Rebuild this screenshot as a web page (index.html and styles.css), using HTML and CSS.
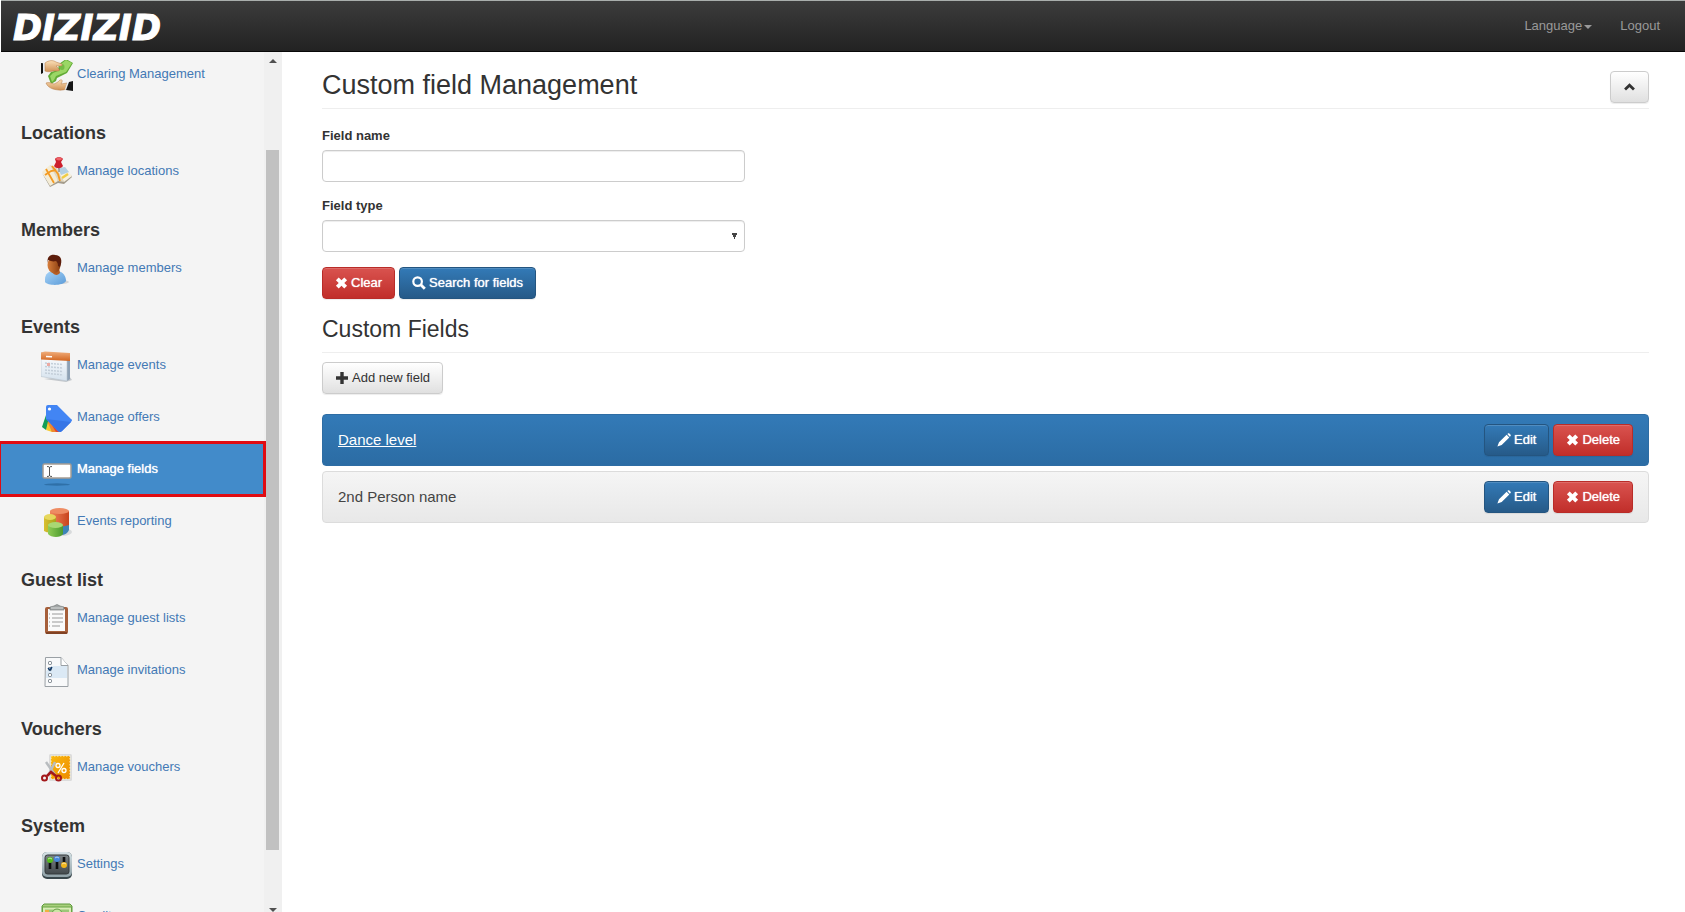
FILE: index.html
```html
<!DOCTYPE html>
<html lang="en">
<head>
<meta charset="utf-8">
<title>Custom field Management</title>
<link rel="stylesheet" href="styles.css">
</head>
<body>
<svg class="sprite" aria-hidden="true">
  <defs>
    <linearGradient id="g-skin" x1="0" y1="0" x2="0" y2="1"><stop offset="0" stop-color="#fbe0b8"/><stop offset="1" stop-color="#cf9256"/></linearGradient>
    <linearGradient id="g-face" x1="0" y1="0" x2="1" y2="0"><stop offset="0" stop-color="#d87f3c"/><stop offset="1" stop-color="#8a3d10"/></linearGradient>
    <linearGradient id="g-shirt" x1="0" y1="0" x2="1" y2="1"><stop offset="0" stop-color="#a8d4f8"/><stop offset="1" stop-color="#5b9bd8"/></linearGradient>
    <linearGradient id="g-orange" x1="0" y1="0" x2="0" y2="1"><stop offset="0" stop-color="#f0ae7c"/><stop offset="1" stop-color="#d3651f"/></linearGradient>
    <linearGradient id="g-page" x1="0" y1="0" x2="0" y2="1"><stop offset="0" stop-color="#ffffff"/><stop offset="1" stop-color="#d5e2ee"/></linearGradient>
    <linearGradient id="g-red" x1="0" y1="0" x2="1" y2="0"><stop offset="0" stop-color="#f0875c"/><stop offset="1" stop-color="#c8431c"/></linearGradient>
    <linearGradient id="g-yellow" x1="0" y1="0" x2="1" y2="0"><stop offset="0" stop-color="#d8c030"/><stop offset="1" stop-color="#a8a21c"/></linearGradient>
    <linearGradient id="g-green" x1="0" y1="0" x2="1" y2="0"><stop offset="0" stop-color="#8fcc55"/><stop offset="1" stop-color="#4c9a2e"/></linearGradient>
    <linearGradient id="g-gold" x1="0" y1="0" x2="1" y2="1"><stop offset="0" stop-color="#f9b90f"/><stop offset="1" stop-color="#ee8c00"/></linearGradient>
    <linearGradient id="g-steel" x1="0" y1="0" x2="0" y2="1"><stop offset="0" stop-color="#d6e2e6"/><stop offset="1" stop-color="#8fa0a6"/></linearGradient>
    <linearGradient id="g-panel" x1="0" y1="0" x2="0" y2="1"><stop offset="0" stop-color="#7c8386"/><stop offset="1" stop-color="#43494c"/></linearGradient>
  </defs>
  <symbol id="remove" viewBox="0 0 14 14"><path fill="currentColor" d="M4 1 7 4 10 1 13 4 10 7 13 10 10 13 7 10 4 13 1 10 4 7 1 4Z"/></symbol>
  <symbol id="search" viewBox="0 0 14 14"><circle cx="5.6" cy="5.6" r="4.3" fill="none" stroke="currentColor" stroke-width="2.2"/><path d="m8.8 8.8 4 4" stroke="currentColor" stroke-width="2.8"/></symbol>
  <symbol id="plus" viewBox="0 0 14 14"><path fill="currentColor" d="M5.3 1h3.4v4.3H13v3.4H8.7V13H5.3V8.7H1V5.3h4.3Z"/></symbol>
  <symbol id="pencil" viewBox="0 0 14 14"><path fill="currentColor" d="m10.4.9.8-.6q.6-.4 1.2.2l1.2 1.2q.5.6 0 1.2l-.8.8ZM9.6 1.7l2.7 2.7-7.6 7.6L.4 13.6 2 9.3Z"/></symbol>
  <symbol id="chevron-up" viewBox="0 0 14 14"><path fill="none" stroke="currentColor" stroke-width="3" d="M2.2 9.600 7 5l4.800 4.600"/></symbol>
</svg>

<header class="navbar">
  <a class="brand" href="#">DIZIZID</a>
  <nav class="navlinks">
    <a href="#">Language<span class="caret"></span></a>
    <a href="#">Logout</a>
  </nav>
</header>

<div class="layout">
  <aside class="sidebar">
    <nav class="menu">
      <a class="item" href="#">
        <svg class="icon" viewBox="0 0 32 32"><path d="m18 4 7-5 7 4-6 10-10 5-1 3-5 3-3-8 3-4 7-2z" fill="#62ab36"/><path d="m20 4 5-4 6 3-6 9-10 4-2 4-2 2-2-6 3-3 7-3z" fill="#9ad765"/><ellipse cx="21" cy="7" rx="2.500" ry="3" fill="#74bb44"/><path d="M0 3l2 .2V13l-2 1z" fill="#111"/><path d="M2 3h2v9l-2 1z" fill="#e8eef4"/><path d="M4 3c4-3 8-3 11-1l6 2q1 2-2 2l-4 0 3 3q1 2-1 2l-5 0c-3 1-6 1-8 0z" fill="url(#g-skin)" stroke="#b67b45" stroke-width=".5"/><path d="M5 23c3-1 5 0 8 1l4-2c2-3 5-3 4 0l-1 2 6-1-1 6c-4 2-9 1-13 0-3-1-6-3-7-6z" fill="url(#g-skin)" stroke="#b67b45" stroke-width=".5"/><path d="m26 23 2 0-2 7-2-1z" fill="#e8eef4"/><path d="m28 22 4-1v10l-7-1z" fill="#161616"/></svg>
        <span>Clearing Management</span></a>

      <h2>Locations</h2>
      <a class="item" href="#">
        <svg class="icon" viewBox="0 0 32 32"><path d="m1 16 8 14 8-4 6 1 8-7-1-2-22 8z" fill="#a39b8b"/><path d="m1 15 8-7 8 16-8 5z" fill="#f4ecd6"/><path d="m9 8 7 3 7 14-6-1z" fill="#dfd6bf"/><path d="m16 11 8-1 7 9-8 6z" fill="#f6f0df"/><path d="m17 11 7-1 4 5-8 3z" fill="#b3cfe2"/><path d="m5 12 8 14M4 18l6-4 5-1M11 9l6 8 2 7" fill="none" stroke="#f39a22" stroke-width="1.800"/><path d="m21 21 6-4" stroke="#f0cc45" stroke-width="2.500"/><path d="m18 10 0 5" stroke="#888" stroke-width="1.300"/><path d="M14 2c1-2.500 7-2.500 8 0l-2 3 2 4c-2 3-7 3-9 0l2-4z" fill="#cc1f2c"/><ellipse cx="18" cy="2" rx="3" ry="1.400" fill="#ee6368"/></svg>
        <span>Manage locations</span></a>

      <h2>Members</h2>
      <a class="item" href="#">
        <svg class="icon" viewBox="0 0 32 32"><ellipse cx="19" cy="28" rx="9" ry="2" fill="#d6d6d6"/><path d="M4 25c0-5 4-8 8-8h5c5 1 8 5 8 10-3 5-18 5-21 1z" fill="url(#g-shirt)"/><path d="m10 15 8-1 1 5q-4 4-8-.5z" fill="#b75d22"/><ellipse cx="13" cy="11" rx="6.500" ry="8" fill="url(#g-face)"/><path d="M7 9C5 2 11 0 14 1c6 0 8 5 5 12l-2-1c0-3-1-4-2-5-3 1-5 0-8-1z" fill="#5c1d0b"/></svg>
        <span>Manage members</span></a>

      <h2>Events</h2>
      <a class="item" href="#">
        <svg class="icon" viewBox="0 0 32 32"><path d="m3 28 22 3 6-2-3-4z" fill="#c4c8cc"/><path d="m26 3 3 2v23l-3 2z" fill="#8ea1b5"/><path d="M0 1.500 26 3v27L0 25.500z" fill="url(#g-page)" stroke="#b9c3cc" stroke-width=".6"/><path d="m0 1.500 4-1L29 2v8L0 8.500z" fill="url(#g-orange)"/><path d="m5 5.500 6 .3" stroke="#fff" stroke-width="1.500"/><path d="m4 12 18 1.500M4 15.500 22 17M4 19l18 1.500M4 22l18 2" stroke="#c3ced9" stroke-width="1.500" stroke-dasharray="2 1"/><path d="M6 12h3v3H6z" fill="#ecaaa3"/></svg>
        <span>Manage events</span></a>
      <a class="item" href="#">
        <svg class="icon" viewBox="0 0 32 32"><path d="M5 12 1 24l4 3 7-10z" fill="#119d58"/><path d="M8 14 5 27l6 2 5-11z" fill="#f6c931"/><path d="m9 17 2 12 7 0 0-8z" fill="#dc4437"/><path d="m7 16 8 13-4 0-4-9z" fill="#ee8a2e"/><path d="M5 4q0-2 2-2h9l14 14q2 1 0 3l-9 9q-2 2-4 0L5 16z" fill="#4285f4"/><path d="m5 16 25 3-9 9q-2 2-4 0z" fill="#3675e6"/><circle cx="8.500" cy="6" r="1.600" fill="#fff"/></svg>
        <span>Manage offers</span></a>
      <a class="item active" href="#" aria-current="page">
        <svg class="icon" viewBox="0 0 32 32"><ellipse cx="16" cy="29.500" rx="13" ry="1.200" fill="#2f70a8"/><rect x="2" y="9" width="28" height="14" rx="1.500" fill="#fff" stroke="#a69d94" stroke-width="1.500"/><path d="M6 11.500q2.500 0 2.500 1 0-1 2.500-1M8.500 12v9M6 21.500q2.500 0 2.500-1 0 1 2.500 1" fill="none" stroke="#555" stroke-width="1"/></svg>
        <span>Manage fields</span></a>
      <a class="item" href="#">
        <svg class="icon" viewBox="0 0 32 32"><ellipse cx="21" cy="25" rx="10" ry="4" fill="#d8dadc"/><path d="M9 4v16h19V4z" fill="url(#g-red)"/><ellipse cx="18.500" cy="4" rx="9.500" ry="3" fill="#ee8c63"/><path d="M3 10v14q5 3 12 0V10z" fill="url(#g-yellow)"/><ellipse cx="9" cy="10" rx="6" ry="3" fill="#e6d75c"/><path d="M20 20v8q6 0 8-5v-5z" fill="#3d84b8"/><path d="M7 18v9c3 4 13 4 15 0v-9z" fill="url(#g-green)"/><ellipse cx="14.500" cy="18" rx="7.500" ry="3" fill="#a9d874"/></svg>
        <span>Events reporting</span></a>

      <h2>Guest list</h2>
      <a class="item" href="#">
        <svg class="icon" viewBox="0 0 32 32"><rect x="4" y="3" width="23" height="27" rx="2" fill="#a65f3a"/><path d="M5 29h21" stroke="#74391c" stroke-width="1.500"/><path d="M7 5h17v22H7z" fill="#fafafa"/><path d="M8 10h1m2 0h11M8 14h1m2 0h11M8 18h1m2 0h11M8 22h1m2 0h8" stroke="#9a9a9a" stroke-width="1"/><path d="M9 6V3l4-1q3-3 6 0l4 1v3z" fill="#a2a6a6" stroke="#7b7f7f" stroke-width=".7"/><path d="M10 4h12" stroke="#d5d8d8"/></svg>
        <span>Manage guest lists</span></a>
      <a class="item" href="#">
        <svg class="icon" viewBox="0 0 32 32"><path d="M4.500 1.500H20l7 8v21h-23z" fill="#f8f9fa" stroke="#9aa0a5"/><path d="M12 10h14v12H5v-7z" fill="#dbe9f5"/><path d="M20 1.500v8h7" fill="#fff" stroke="#9aa0a5"/><g fill="#fff" stroke="#6d7780"><rect x="7.500" y="5.500" width="3" height="3" rx="1"/><rect x="7.500" y="11.500" width="3" height="3" rx="1"/><rect x="7.500" y="17.500" width="3" height="3" rx="1"/><rect x="7.500" y="23.500" width="3" height="3" rx="1"/></g><path d="m7 12 2 2 2-3" fill="none" stroke="#123c6c" stroke-width="1.500"/></svg>
        <span>Manage invitations</span></a>

      <h2>Vouchers</h2>
      <a class="item" href="#">
        <svg class="icon" viewBox="0 0 32 32"><rect x="8" y="1" width="23" height="27" rx="1.500" fill="#dcdcdc"/><path d="M10 3h19v23H10z" fill="url(#g-gold)"/><path d="M10 3h19v23H10z" fill="none" stroke="#fff2c0" stroke-dasharray="1.500 1.500"/><circle cx="17" cy="12.500" r="2" fill="none" stroke="#fff" stroke-width="1.300"/><circle cx="23" cy="17.500" r="2" fill="none" stroke="#fff" stroke-width="1.300"/><path d="m23 10-6 10" stroke="#fff" stroke-width="1.300"/><path d="m5 9 9 13M14 9 8 21" stroke="#b9bdc0" stroke-width="2.500"/><path d="m6 23 4-4 5 4" fill="none" stroke="#a3181a" stroke-width="2.500"/><circle cx="3.500" cy="25" r="2.500" fill="none" stroke="#a3181a" stroke-width="2"/><circle cx="17.500" cy="25" r="2.500" fill="none" stroke="#a3181a" stroke-width="2"/></svg>
        <span>Manage vouchers</span></a>

      <h2>System</h2>
      <a class="item" href="#">
        <svg class="icon" viewBox="0 0 32 32"><rect x="1" y="2" width="30" height="27" rx="5" fill="#39464b"/><rect x="1" y="2" width="30" height="25" rx="5" fill="url(#g-steel)"/><rect x="4" y="5" width="24" height="19" rx="2.500" fill="url(#g-panel)" stroke="#343a3c"/><path d="M9 11v8M16 11v8M23 7v7" stroke="#0d0f10" stroke-width="2.600"/><circle cx="9" cy="10" r="3" fill="#54bd1c"/><circle cx="16" cy="9" r="3" fill="#4689dd"/><circle cx="23" cy="15" r="3" fill="#f2b61b"/><path d="M7 9q2-2 4 0M14 8q2-2 4 0M21 14q2-2 4 0" stroke="#fff" stroke-opacity=".6" fill="none"/></svg>
        <span>Settings</span></a>
      <a class="item" href="#">
        <svg class="icon" viewBox="0 0 32 32"><path d="M1 4 3 2h26l2 2v26H1z" fill="#a8cf7c" stroke="#5e9a3c"/><rect x="1.500" y="5" width="29" height="16" fill="#d9ecb6" stroke="#67a343"/><rect x="4" y="7.500" width="24" height="11" fill="#9cc778"/><circle cx="16" cy="12" r="5" fill="#cbe5a5" stroke="#659e46"/><path d="M4 8h4v2H4z" fill="#f0b13f"/></svg>
        <span>Credits</span></a>
    </nav>
    <div class="scrollbar" aria-hidden="true">
      <span class="arrow up"></span>
      <span class="gap-before"></span>
      <span class="thumb"></span>
      <span class="gap-after"></span>
      <span class="arrow down"></span>
    </div>
  </aside>

  <main class="content">
    <div class="page-title">
      <h1>Custom field Management</h1>
      <button class="btn default" type="button" aria-label="Collapse"><svg class="glyph narrow"><use href="#chevron-up"/></svg></button>
    </div>
    <form class="filters">
      <label for="field-name">Field name</label>
      <input class="control" id="field-name" type="text">
      <label for="field-type">Field type</label>
      <select class="control" id="field-type"><option></option></select>
      <div class="buttons">
        <button class="btn danger" type="button"><svg class="glyph narrow"><use href="#remove"/></svg>Clear</button>
        <button class="btn primary" type="button"><svg class="glyph"><use href="#search"/></svg>Search for fields</button>
      </div>
    </form>
    <h2 class="section-title">Custom Fields</h2>
    <button class="btn default" type="button"><svg class="glyph"><use href="#plus"/></svg>Add new field</button>
    <ul class="fields">
      <li class="field selected">
        <a href="#">Dance level</a>
        <div class="buttons">
          <button class="btn primary" type="button"><svg class="glyph"><use href="#pencil"/></svg>Edit</button>
          <button class="btn danger" type="button"><svg class="glyph narrow"><use href="#remove"/></svg>Delete</button>
        </div>
      </li>
      <li class="field">
        <a href="#">2nd Person name</a>
        <div class="buttons">
          <button class="btn primary" type="button"><svg class="glyph"><use href="#pencil"/></svg>Edit</button>
          <button class="btn danger" type="button"><svg class="glyph narrow"><use href="#remove"/></svg>Delete</button>
        </div>
      </li>
    </ul>
  </main>
</div>
</body>
</html>
```
FILE: styles.css
```css
* { box-sizing: border-box; }

body {
  margin: 0;
  height: 100vh;
  display: flex;
  flex-direction: column;
  overflow: hidden;
  background: #fff;
  color: #333;
  font: 13px/20px "Liberation Sans", Arial, sans-serif;
}

h1, h2, ul { margin: 0; padding: 0; font-weight: 400; }
a { color: #4379b5; text-decoration: none; }
.sprite { position: absolute; width: 0; height: 0; }

/* Top bar */
.navbar {
  flex: none;
  display: flex;
  justify-content: space-between;
  align-items: center;
  height: 52px;
  margin-left: 1px;
  padding: 0 25px 0 12px;
  background: linear-gradient(#3c3c3c, #222);
  border-top: 1px solid #a9aeac;
  border-bottom: 1px solid #080808;
}
.brand {
  padding-top: 3px;
  color: #fff;
  font: italic bold 35px/48px "DejaVu Sans", sans-serif;
  -webkit-text-stroke: 1px #fff;
}
.navlinks { display: flex; gap: 28px; }
.navlinks a { color: #999; }
.caret {
  display: inline-block;
  margin-left: 2px;
  vertical-align: middle;
  border-top: 4px solid #999;
  border-left: 4px solid transparent;
  border-right: 4px solid transparent;
}

.layout { flex: 1; display: flex; min-height: 0; }

/* Sidebar */
.sidebar {
  flex: none;
  display: flex;
  width: 282px;
  overflow: hidden;
  background: #f4f4f4;
}
.menu { flex: 1; margin-top: -4px; }
.menu h2 {
  padding: 23px 0 2px 21px;
  font-size: 18px;
  font-weight: 700;
  line-height: 20px;
}
.item {
  display: flex;
  gap: 4px;
  height: 52px;
  padding: 12px 0 0 41px;
}
.item span { padding-top: 4px; }
.icon { width: 32px; height: 32px; }
.item.active {
  position: relative;
  z-index: 1;
  background: #428bca;
  color: #fff;
  outline: 3px solid #e00b12;
  outline-offset: -1px;
  text-shadow: 0 0 1px #fff;
}

.scrollbar {
  flex: none;
  display: flex;
  flex-direction: column;
  align-items: center;
  width: 18px;
  padding-right: 1px;
  background: #f0f0f0;
}
.arrow {
  margin: 7px 0 6px;
  border: 4px solid transparent;
}
.arrow.up { border-top: 0; border-bottom-color: #505050; }
.arrow.down { margin: 6px 0 0; border-bottom: 0; border-top-color: #505050; }
.gap-before { flex: 81; }
.thumb { flex: 700; width: 13px; background: #c1c1c1; }
.gap-after { flex: 52; }

/* Main column */
.content { flex: 1; padding: 19px 36px 0 40px; }
.page-title {
  display: flex;
  justify-content: space-between;
  align-items: flex-start;
  padding-bottom: 5px;
  border-bottom: 1px solid #eee;
}
.page-title h1 { font-size: 27px; line-height: 28px; }

.filters { padding-top: 17px; }
.filters label {
  display: block;
  margin-bottom: 4px;
  font-weight: 700;
}
.control {
  display: block;
  width: calc((100% - 57px) / 3);
  height: 32px;
  margin-bottom: 14px;
  padding: 6px;
  background: #fff;
  border: 1px solid #ccc;
  border-radius: 4px;
  box-shadow: inset 0 1px 1px rgba(0, 0, 0, .075);
  font: inherit;
}
select.control {
  margin-bottom: 15px;
  appearance: none;
  background: conic-gradient(from -27deg at 50% 100%, #444 54deg, transparent 0) no-repeat right 6px center / 7px 6px;
}

.buttons { display: flex; gap: 4px; }
.btn {
  display: inline-flex;
  align-items: center;
  gap: 3px;
  height: 32px;
  padding: 0 12px;
  border: 1px solid;
  border-radius: 4px;
  box-shadow: inset 0 1px 0 rgba(255, 255, 255, .15), 0 1px 1px rgba(0, 0, 0, .075);
  color: #fff;
  font: inherit;
}
.glyph { width: 14px; height: 14px; }
.glyph.narrow { width: 13px; }
.default { color: #333; border-color: #ccc; background: linear-gradient(#fff, #e0e0e0); }
.primary { border-color: #245580; background: linear-gradient(#337ab7, #265a88); }
.danger { border-color: #b92c28; background: linear-gradient(#d9534f, #c12e2a); }
.primary, .danger { text-shadow: 0 0 1px #fff; }

.section-title {
  margin: 17px 0 9px;
  padding-bottom: 10px;
  border-bottom: 1px solid #eee;
  font-size: 23px;
  line-height: 26px;
}

.fields {
  display: grid;
  gap: 5px;
  margin-top: 20px;
  list-style: none;
}
.field {
  display: flex;
  justify-content: space-between;
  align-items: center;
  padding: 9px 15px;
  border: 1px solid #dcdcdc;
  border-radius: 4px;
  background: linear-gradient(#f5f5f5, #e8e8e8);
  font-size: 15px;
}
.field a { color: #444; }
.field .btn { font-size: 13px; }
.selected { border-color: #2e6da4; background: linear-gradient(#337ab7, #2b6ca4); }
.selected a { color: #fff; text-decoration: underline; }
```
